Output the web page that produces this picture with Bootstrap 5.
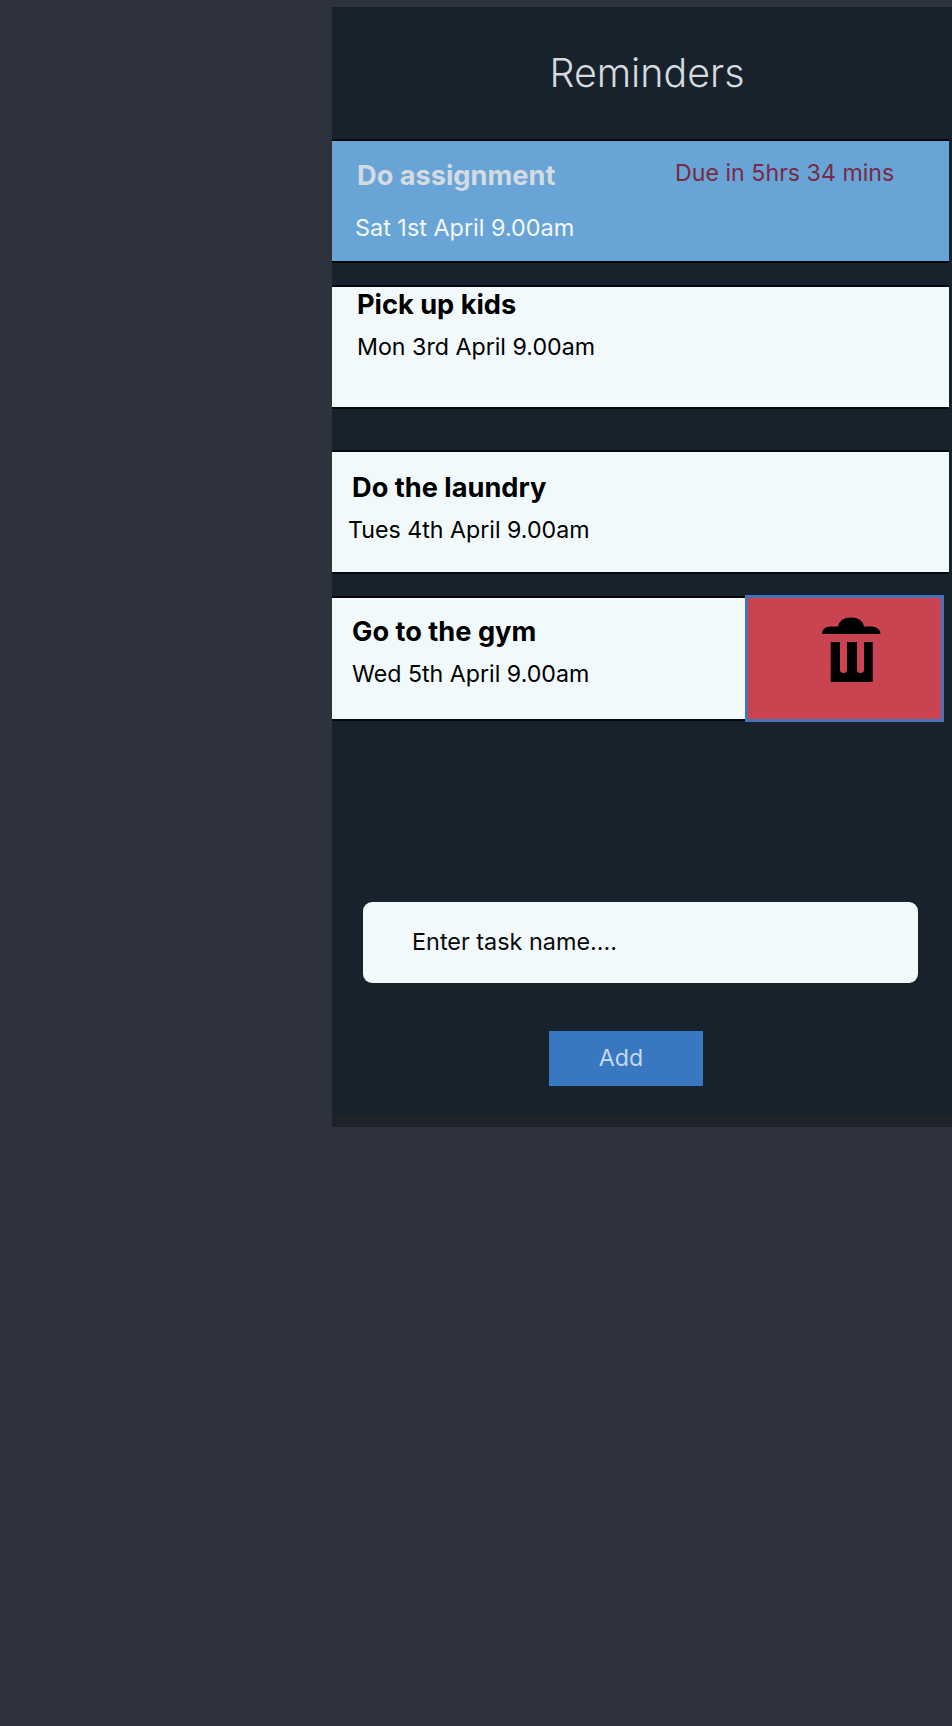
<!DOCTYPE html>
<html lang="en">
<head>
<meta charset="utf-8">
<title>Reminders</title>
<link href="https://cdn.jsdelivr.net/npm/bootstrap@5.3.0/dist/css/bootstrap.min.css" rel="stylesheet">
<style>
body{background:#2e323d;font-family:Inter,"Liberation Sans",sans-serif;min-height:1726px}
.phone{margin:7px 0 0 332px;width:620px;height:1120px;background:#18222c;border-bottom:12px solid #1f2327;display:flex;flex-direction:column}
.app-title{height:132px;margin:0;padding-top:43.500px;padding-left:10px;text-align:center;font-size:39.4px;font-weight:300;line-height:44px;color:#d6d9de}
.task{width:617px;height:124px;background:#f1f9fb;border-top:2px solid #05080c;border-bottom:2px solid #05080c;color:#000;position:relative}
.task-name{font-size:27.2px;font-weight:700;line-height:32px;margin:0;color:inherit}
.task-date{font-size:23.2px;font-weight:400;line-height:28px;margin:0}
.active-task{background:#68a5d6;padding:19px 0 0 25px;color:#f2f8fb}
.active-task .task-name{color:#d5dbe3}
.active-task .task-date{font-size:23.400px;margin:22px 0 0 -2px}
.due{font-size:23.2px;line-height:28px;color:#7a2a45;width:240px;position:relative;left:318px;top:-33px;height:0}
.t2{margin-top:22px;padding:2px 0 0 25px}
.t2 .task-date{margin-top:12px}
.t3{margin-top:41px;padding:20px 0 0 20px}
.t3 .task-date{margin:12px 0 0 -4px}
.t4{width:413px;height:125px;margin-top:22px;padding:18px 0 0 20px;display:flex}
.t4 .task-date{margin-top:12px}
.del-box{position:absolute;left:413px;top:-3px;width:199px;height:127px;background:#c94450;border:3px solid #4a72b8;display:flex;justify-content:center;align-items:flex-start;padding:19px 0 0 13px}
.new-task{margin:180.500px 0 0 31px;width:555px;height:81px;border:0;border-radius:9px;background:#f1f9fb;color:#000;padding:0 0 2px 49px;font-size:23.4px}
.new-task::placeholder{color:#0a0a0a;opacity:1}
.add-btn{margin:48px 0 0 217px;width:154px;height:55px;background:#3878c0;border:0;border-radius:0;color:#c4d8ee;font-size:23.2px;padding:1px 10px 0 0}
</style>
</head>
<body>
<div class="phone">
  <h1 class="app-title">Reminders</h1>
  <div class="task active-task">
    <h2 class="task-name">Do assignment</h2>
    <div class="due">Due in 5hrs 34 mins</div>
    <p class="task-date">Sat 1st April 9.00am</p>
  </div>
  <div class="task t2">
    <h2 class="task-name">Pick up kids</h2>
    <p class="task-date">Mon 3rd April 9.00am</p>
  </div>
  <div class="task t3">
    <h2 class="task-name">Do the laundry</h2>
    <p class="task-date">Tues 4th April 9.00am</p>
  </div>
  <div class="task t4">
    <div>
      <h2 class="task-name">Go to the gym</h2>
      <p class="task-date">Wed 5th April 9.00am</p>
    </div>
    <button class="del-box" type="button" aria-label="Delete">
      <svg width="59" height="65" viewBox="0 0 59 65" fill="#000"><path d="M0 17Q0 10 8 9.500L16 9.500Q18 0.500 29 0.500Q40 0.500 42 9.500L50 9.500Q58 10 58.500 17Z"/><path d="M8.700 25H18V53Q18 56 21.500 56Q25 56 25 53V25H35V53Q35 56 38.500 56Q42 56 42 53V25H50.700V65H8.700Z"/></svg>
    </button>
  </div>
  <input class="form-control new-task" type="text" placeholder="Enter task name....">
  <button class="btn add-btn" type="button">Add</button>
</div>
<script src="https://cdn.jsdelivr.net/npm/bootstrap@5.3.0/dist/js/bootstrap.bundle.min.js"></script>
</body>
</html>
